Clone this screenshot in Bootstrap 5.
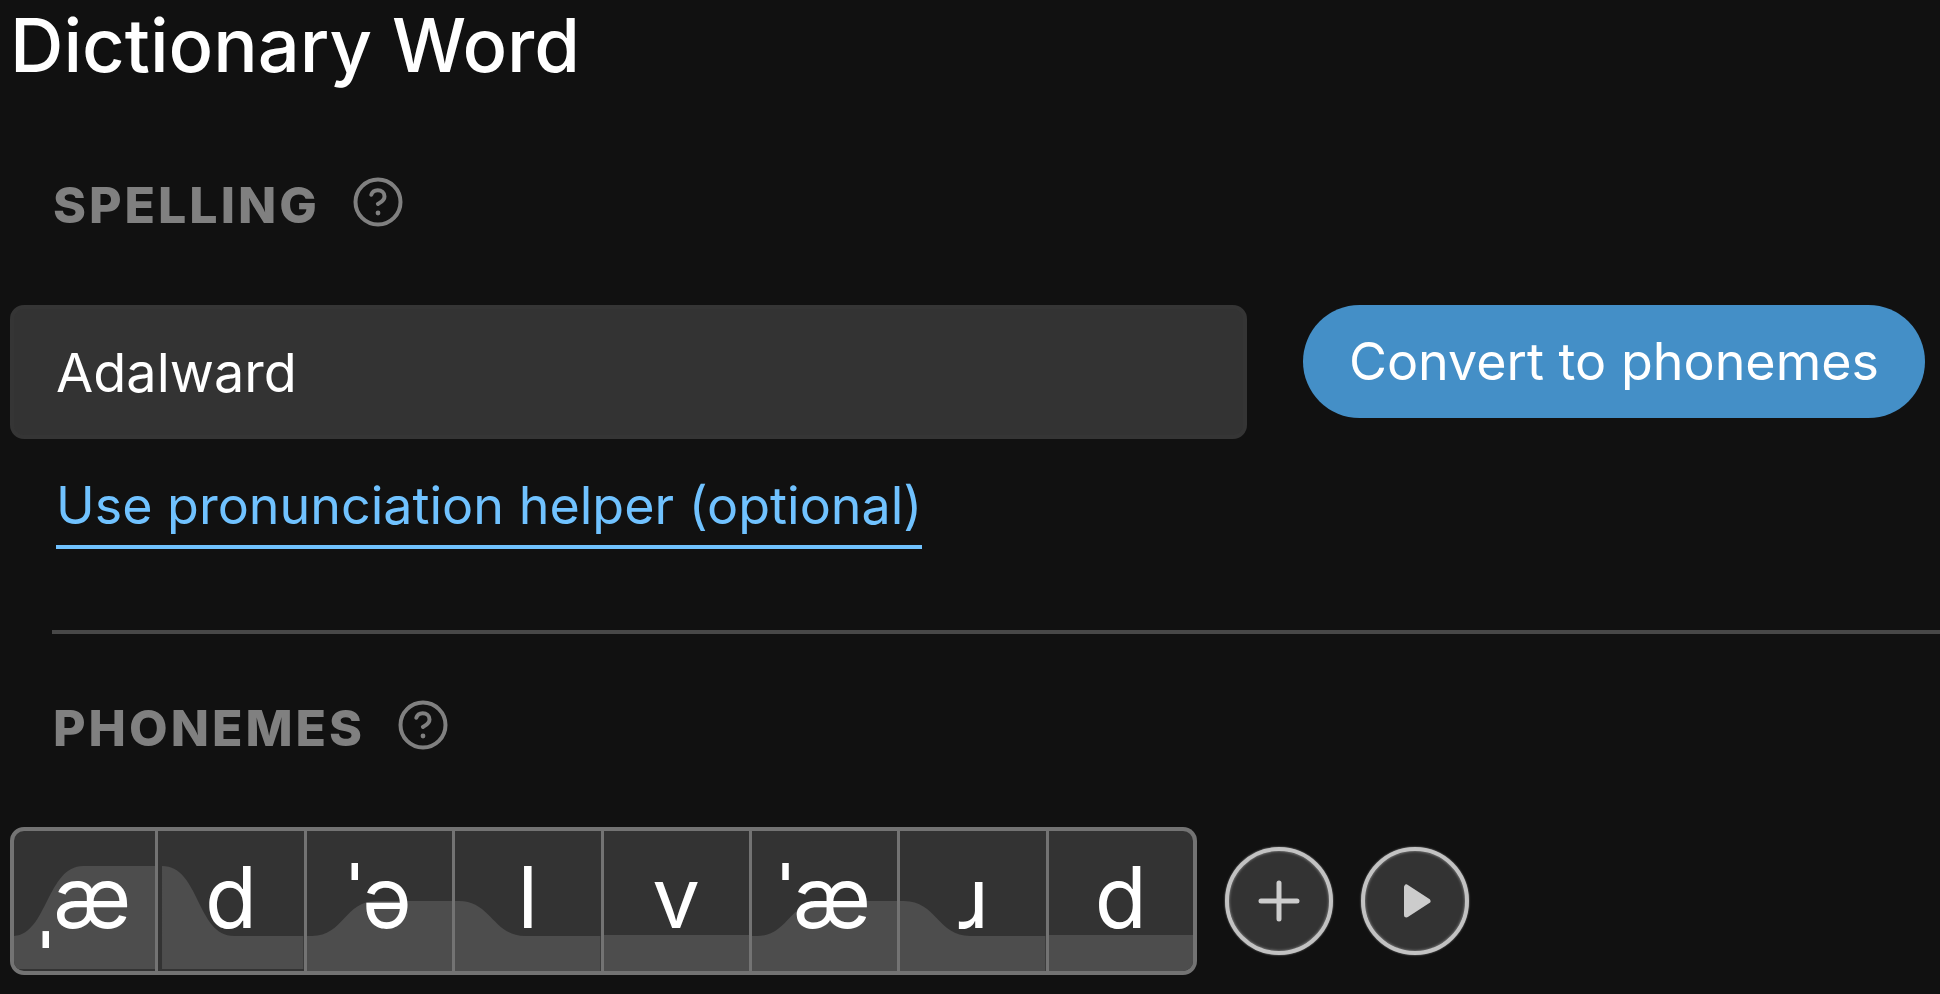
<!DOCTYPE html>
<html lang="en">
<head>
<meta charset="utf-8">
<meta name="viewport" content="width=device-width, initial-scale=1">
<title>Dictionary Word</title>
<link rel="stylesheet" href="https://cdn.jsdelivr.net/npm/bootstrap@5.3.0/dist/css/bootstrap.min.css">
<style>
  body { background: #111; color: #fff; font-family: Inter, "Noto Sans", sans-serif; }
  .editor { padding: 0 15px 8px 10px; }
  .page-title { font-size: 74px; line-height: 90px; font-weight: 500; margin: 0 0 87px; }
  .section-head { gap: 33px; padding-left: 43px; color: #808080; }
  .section-title { font-size: 50px; line-height: 56px; font-weight: 800; letter-spacing: 3px; }
  .help-btn { width: 50px; height: 50px; margin-bottom: 6px; color: #808080; }
  .help-btn svg, .round-btn svg { display: block; }
  .spelling-row { gap: 56px; margin-top: 72px; }
  .word-input { height: 134px; padding: 0 42px; font-size: 54px; border: 4px solid #353535; border-radius: 14px; background: #333; color: #fff; }
  .word-input:focus { background: #333; color: #fff; }
  .convert-btn { height: 113px; padding: 0 46px; border-radius: 57px; background: #448fc7; color: #fff; font-size: 52px; line-height: 60px; }
  .convert-btn:hover { background: #3a80b5; color: #fff; }
  .helper-link { margin: 39px 0 0 46px; padding-bottom: 11px; font-size: 52px; line-height: 56px; color: #70c2ff; border-bottom: 4px solid #70c2ff; }
  .divider { margin: 81px -15px 66px 42px; border-top: 4px solid #484848; opacity: 1; }
  .phoneme-row { gap: 28px; margin-top: 71px; }
  .phoneme-strip { width: 1187px; }
  .phoneme { height: 148px; flex: 0 1 12.5%; min-width: 0; padding: 0 0 6px; background: #333; color: #fff; border: solid #737373; border-width: 4px 3px 4px 0; font-size: 85px; line-height: 100px; }
  .phoneme:first-child { border-left-width: 4px; border-radius: 14px 0 0 14px; }
  .phoneme:last-child { border-right-width: 4px; border-radius: 0 14px 14px 0; }
  .contour { inset: 0; fill: #4d4d4d; }
  .round-btn { width: 108px; height: 108px; border: 4px solid #c2c2c2; background: #333; color: #ccc; box-shadow: 0 0 2px #999, inset 0 0 3px #999; }
</style>
</head>
<body>
<main class="editor">
  <h1 class="page-title">Dictionary Word</h1>

  <section>
    <div class="section-head d-flex align-items-center">
      <label class="section-title" for="word">SPELLING</label>
      <button type="button" class="help-btn btn p-0 border-0" aria-label="Spelling help">
        <svg width="50" height="50" viewBox="0 0 50 50" fill="none" stroke="currentColor" stroke-width="4" stroke-linecap="round"><circle cx="25" cy="25" r="22.5"/><path d="M18.300 17.800C19.200 14.800 21.700 13.200 24.700 13.200C28.600 13.200 31.500 15.800 31.500 19.400C31.500 23.600 27.400 25.300 24.900 27"/><circle cx="25" cy="36" r="2.400" fill="currentColor" stroke="none"/></svg>
      </button>
    </div>
    <div class="spelling-row d-flex align-items-start">
      <input id="word" class="word-input form-control flex-fill w-auto" type="text" value="Adalward" size="1">
      <button type="button" class="convert-btn btn border-0 text-nowrap">Convert to phonemes</button>
    </div>
    <a href="#" class="helper-link d-inline-block text-decoration-none">Use pronunciation helper (optional)</a>
  </section>

  <hr class="divider">

  <section>
    <div class="section-head d-flex align-items-center">
      <h2 class="section-title m-0">PHONEMES</h2>
      <button type="button" class="help-btn btn p-0 border-0" aria-label="Phonemes help">
        <svg width="50" height="50" viewBox="0 0 50 50" fill="none" stroke="currentColor" stroke-width="4" stroke-linecap="round"><circle cx="25" cy="25" r="22.5"/><path d="M18.300 17.800C19.200 14.800 21.700 13.200 24.700 13.200C28.600 13.200 31.500 15.800 31.500 19.400C31.500 23.600 27.400 25.300 24.900 27"/><circle cx="25" cy="36" r="2.400" fill="currentColor" stroke="none"/></svg>
      </button>
    </div>
    <div class="phoneme-row d-flex align-items-center">
      <div class="phoneme-strip d-flex">
        <button type="button" class="phoneme position-relative overflow-hidden"><svg class="contour position-absolute w-100 h-100" viewBox="0 0 145 140" preserveAspectRatio="none"><path d="M0 105C34 103 34 35 71 35H145V138H0Z"/></svg><span class="position-relative">ˌæ</span></button>
        <button type="button" class="phoneme position-relative overflow-hidden"><svg class="contour position-absolute w-100 h-100" viewBox="0 0 145 140" preserveAspectRatio="none"><path d="M4 35C42 35 38 105 76 105H145V138H4Z"/></svg><span class="position-relative">d</span></button>
        <button type="button" class="phoneme position-relative overflow-hidden"><svg class="contour position-absolute w-100 h-100" viewBox="0 0 145 140" preserveAspectRatio="none"><path d="M0 105H5C36 105 38 70 69 70H145V140H0Z"/></svg><span class="position-relative">ˈə</span></button>
        <button type="button" class="phoneme position-relative overflow-hidden"><svg class="contour position-absolute w-100 h-100" viewBox="0 0 145 140" preserveAspectRatio="none"><path d="M0 70H4C36 70 38 105 70 105H145V140H0Z"/></svg><span class="position-relative">l</span></button>
        <button type="button" class="phoneme position-relative overflow-hidden"><svg class="contour position-absolute w-100 h-100" viewBox="0 0 145 140" preserveAspectRatio="none"><path d="M0 104H145V140H0Z"/></svg><span class="position-relative">v</span></button>
        <button type="button" class="phoneme position-relative overflow-hidden"><svg class="contour position-absolute w-100 h-100" viewBox="0 0 145 140" preserveAspectRatio="none"><path d="M0 105H5C36 105 38 70 69 70H145V140H0Z"/></svg><span class="position-relative">ˈæ</span></button>
        <button type="button" class="phoneme position-relative overflow-hidden"><svg class="contour position-absolute w-100 h-100" viewBox="0 0 145 140" preserveAspectRatio="none"><path d="M0 70H4C36 70 38 105 70 105H145V140H0Z"/></svg><span class="position-relative">ɹ</span></button>
        <button type="button" class="phoneme position-relative overflow-hidden"><svg class="contour position-absolute w-100 h-100" viewBox="0 0 145 140" preserveAspectRatio="none"><path d="M0 104H145V140H0Z"/></svg><span class="position-relative">d</span></button>
      </div>
      <button type="button" class="round-btn btn rounded-circle p-0 d-flex align-items-center justify-content-center" aria-label="Add phoneme">
        <svg width="42" height="42" viewBox="0 0 42 42" fill="none" stroke="currentColor" stroke-width="5" stroke-linecap="round"><path d="M21 3V39M3 21H39"/></svg>
      </button>
      <button type="button" class="round-btn btn rounded-circle p-0 d-flex align-items-center justify-content-center" aria-label="Play">
        <svg width="42" height="42" viewBox="0 0 42 42" fill="currentColor" stroke="currentColor" stroke-width="5" stroke-linejoin="round"><path d="M12.500 7V35L34 21Z"/></svg>
      </button>
    </div>
  </section>
</main>
<script src="https://cdn.jsdelivr.net/npm/bootstrap@5.3.0/dist/js/bootstrap.bundle.min.js"></script>
</body>
</html>
